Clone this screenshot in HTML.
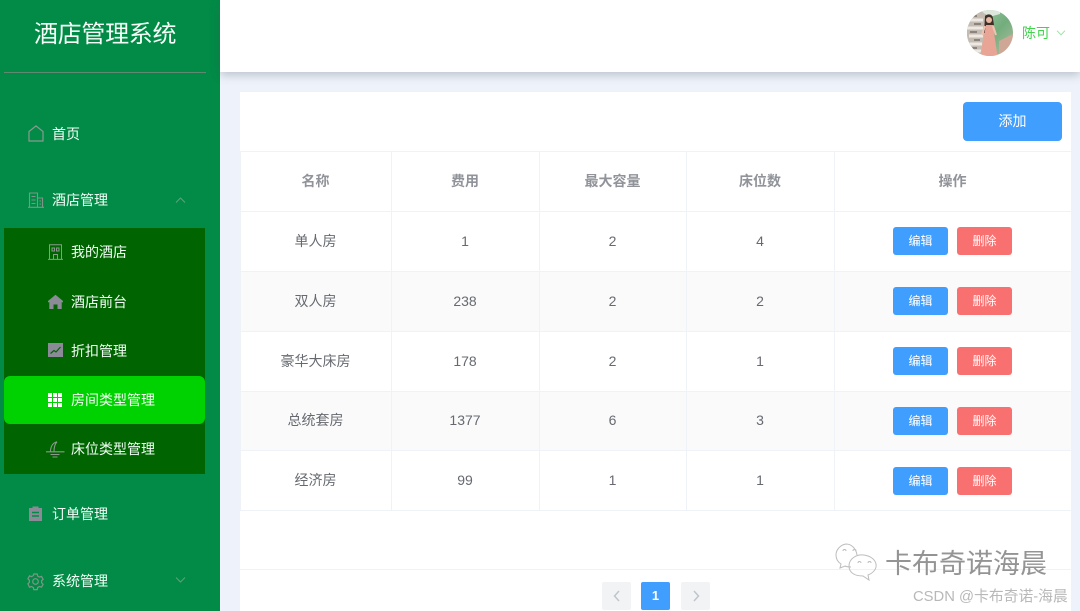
<!DOCTYPE html>
<html lang="zh"><head><meta charset="utf-8"><title>酒店管理系统</title>
<style>
*{box-sizing:border-box}
html,body{margin:0;padding:0;width:1080px;height:611px;overflow:hidden;background:#eef3fb;font-family:"Liberation Sans","Noto Sans CJK SC",sans-serif}
.a{position:absolute}
.t{position:absolute;white-space:nowrap;line-height:20px}
#side{left:0;top:0;width:220px;height:611px;background:#018b46}
.m{color:#f2fff6;font-size:14px}
.ic{position:absolute;overflow:visible}
.hl{position:absolute;left:240px;width:831px;height:1px;background:#eff2f7}
.vl{position:absolute;top:151px;width:1px;height:359px;background:#eff2f7}
.c{position:absolute;text-align:center;font-size:14px;color:#666a70;line-height:20px;white-space:nowrap}
.h{font-weight:700;color:#909399}
.b{position:absolute;width:55px;height:28px;border-radius:3px;color:#fff;font-size:12px;line-height:28px;text-align:center}
.e{left:893px;background:#409eff}
.d{left:957px;background:#f97070}
.p{position:absolute;top:582px;width:29px;height:28px;border-radius:2px;background:#f2f3f5;color:#b4b6bb;text-align:center}
</style></head><body>
<div class="a" id="side"></div>
<div class="t" style="left:34px;top:18px;font-size:24px;line-height:34px;letter-spacing:-.3px;color:#f5fff8">酒店管理系统</div>
<div class="a" style="left:4px;top:72px;width:202px;height:1px;background:#5f8a70"></div>

<svg class="ic" style="left:28px;top:125px" width="16" height="17" viewBox="0 0 16 17" fill="none" stroke="#8a9a90" stroke-width="1.2"><path d="M1 6.500 8 .9l7 5.600V16H1z"/></svg>
<div class="t m" style="left:52px;top:124px">首页</div>

<svg class="ic" style="left:28px;top:192px" width="16" height="16" viewBox="0 0 16 16" fill="none" stroke="#7f9587" stroke-width="1.100"><path d="M1.500 15V1h8v14M9.500 6H14.500v9M0 15.300h16M3.500 4.500h4M3.500 8h4M3.500 11.500h4M11.500 9h1.500M11.500 12h1.500"/></svg>
<div class="t m" style="left:52px;top:190px">酒店管理</div>
<svg class="ic" style="left:175px;top:197px" width="11" height="6" viewBox="0 0 11 6" fill="none" stroke="#5fa27c" stroke-width="1"><path d="M1 5.500 5.500 1 10 5.500"/></svg>

<div class="a" style="left:4px;top:228px;width:201px;height:246px;background:#006400"></div>
<div class="a" style="left:4px;top:376px;width:201px;height:48px;background:#00d100;border-radius:6px"></div>

<svg class="ic" style="left:48px;top:244px" width="15" height="16" viewBox="0 0 15 16" fill="none" stroke="#8a9a8c" stroke-width="1"><path d="M1.500 15V.8h12V15M0 15.400h15M4 4h2.500v3H4zM8.500 4H11v3H8.500zM5.500 15v-4.500h4V15"/></svg>
<div class="t m" style="left:71px;top:242px">我的酒店</div>

<svg class="ic" style="left:48px;top:294px" width="15" height="15" viewBox="0 0 15 15" fill="#8b8b97"><path d="M7.500 .8 15 7v1.300h-1.300V15H9.500v-4.500h-4V15H1.300V8.300H0V7z"/></svg>
<div class="t m" style="left:71px;top:292px">酒店前台</div>

<svg class="ic" style="left:48px;top:343px" width="15" height="14" viewBox="0 0 15 14"><rect width="15" height="14" fill="#8b8b97"/><path d="M2.500 10.500 6 7.500l2 1.500 4.500-5" fill="none" stroke="#006400" stroke-width="1.200"/></svg>
<div class="t m" style="left:71px;top:341px">折扣管理</div>

<svg class="ic" style="left:48px;top:393px" width="14" height="14" viewBox="0 0 14 14" fill="#fff"><rect width="4" height="4"/><rect x="5" width="4" height="4"/><rect x="10" width="4" height="4"/><rect y="5" width="4" height="4"/><rect x="5" y="5" width="4" height="4"/><rect x="10" y="5" width="4" height="4"/><rect y="10" width="4" height="4"/><rect x="5" y="10" width="4" height="4"/><rect x="10" y="10" width="4" height="4"/></svg>
<div class="t m" style="left:71px;top:390px;color:#f2fff2">房间类型管理</div>

<svg class="ic" style="left:46px;top:441px" width="19" height="17" viewBox="0 0 19 17" fill="none" stroke="#8a9a8c" stroke-width="1.100"><path d="M11 .8C6.500 2 4.500 6 4.500 10.500M11 .8C9 3 8 6.500 8 10.500M0 10.800h18.500M4.500 13.500h9M6.500 16h5"/></svg>
<div class="t m" style="left:71px;top:439px">床位类型管理</div>

<svg class="ic" style="left:29px;top:506px" width="13" height="15" viewBox="0 0 13 15" fill="#8b8b97"><path d="M0 2h3.500V.5h6V2H13v13H0z"/><path d="M3 6.500h7M3 10h7" stroke="#018b46" stroke-width="1.400"/></svg>
<div class="t m" style="left:52px;top:504px">订单管理</div>

<svg class="ic" style="left:27px;top:573px" width="17" height="17" viewBox="0 0 17 17" fill="none" stroke="#7f9587" stroke-width="1.200"><path d="M6.800 1h3.400l.5 2.100 1.800 1 2-.7 1.600 2.900-1.500 1.500v2l1.500 1.500-1.600 2.900-2-.7-1.800 1-.5 2.100H6.800l-.5-2.100-1.800-1-2 .7L.9 10.800l1.500-1.500v-2L.9 5.800l1.600-2.900 2 .7 1.800-1z"/><circle cx="8.500" cy="8.500" r="2.800"/></svg>
<div class="t m" style="left:52px;top:571px">系统管理</div>
<svg class="ic" style="left:175px;top:577px" width="11" height="6" viewBox="0 0 11 6" fill="none" stroke="#5fa27c" stroke-width="1"><path d="M1 .5 5.500 5 10 .5"/></svg>

<div class="a" style="left:220px;top:0;width:860px;height:72px;background:#fff;box-shadow:0 3px 9px rgba(70,80,90,.3)"></div>

<svg class="ic" style="left:967px;top:10px" width="46" height="46" viewBox="0 0 46 46">
<defs><clipPath id="cp"><circle cx="23" cy="23" r="23"/></clipPath>
<linearGradient id="g" x1="0" y1="0" x2="1" y2="1"><stop offset="0" stop-color="#a5cdac"/><stop offset=".55" stop-color="#72ad7c"/><stop offset="1" stop-color="#b7bfa6"/></linearGradient></defs>
<g clip-path="url(#cp)">
<rect width="46" height="46" fill="url(#g)"/>
<rect width="18" height="46" fill="#c4bcb3"/>
<path d="M1 10h15M0 18h16M2 26h14M0 34h15M3 41h13" stroke="#ece8e3" stroke-width="3"/>
<path d="M4 6h6M7 14h7M3 22h7M7 30h6M4 38h6" stroke="#6b625b" stroke-width="1.300"/>
<path d="M13 0h20v4l-11 3z" fill="#dde6dc"/>
<path d="M32 31l14-7v22H32z" fill="#cfa796"/>
<path d="M18 6c3-3 8-2 8 3l1 6h-6l-1 8h-3z" fill="#3f2d28"/>
<circle cx="22" cy="10" r="3" fill="#e5b8a2"/>
<path d="M19 15h7l1.500 11 3 20H13l4-20z" fill="#e8a596"/>
<path d="M18 16l-3 9M26 16l3 9" stroke="#f0c3b1" stroke-width="2"/>
</g></svg>
<div class="t" style="left:1022px;top:23px;font-size:14px;color:#3fd44c">陈可</div>
<svg class="ic" style="left:1056px;top:30px" width="10" height="6" viewBox="0 0 10 6" fill="none" stroke="#9ae3a0" stroke-width="1"><path d="M1 .7 5 4.800 9 .7"/></svg>

<div class="a" style="left:240px;top:92px;width:831px;height:519px;background:#fff"></div>
<div class="a" style="left:240px;top:272px;width:831px;height:59px;background:#fafafa"></div>
<div class="a" style="left:240px;top:392px;width:831px;height:58px;background:#fafafa"></div>

<div class="a" style="left:963px;top:102px;width:99px;height:39px;border-radius:4px;background:#409eff;color:#fff;font-size:14px;line-height:39px;text-align:center">添加</div>

<div class="hl" style="top:151px"></div><div class="hl" style="top:211px"></div><div class="hl" style="top:271px"></div><div class="hl" style="top:331px"></div><div class="hl" style="top:391px"></div><div class="hl" style="top:450px"></div><div class="hl" style="top:510px"></div><div class="hl" style="top:569px"></div>
<div class="vl" style="left:240px"></div><div class="vl" style="left:391px"></div><div class="vl" style="left:539px"></div><div class="vl" style="left:686px"></div><div class="vl" style="left:834px"></div>

<div class="c h" style="left:240px;width:151px;top:171px">名称</div><div class="c h" style="left:391px;width:148px;top:171px">费用</div><div class="c h" style="left:539px;width:147px;top:171px">最大容量</div><div class="c h" style="left:686px;width:148px;top:171px">床位数</div><div class="c h" style="left:834px;width:237px;top:171px">操作</div>

<div class="c" style="left:240px;width:151px;top:231px">单人房</div><div class="c" style="left:391px;width:148px;top:231px">1</div><div class="c" style="left:539px;width:147px;top:231px">2</div><div class="c" style="left:686px;width:148px;top:231px">4</div>
<div class="c" style="left:240px;width:151px;top:291px">双人房</div><div class="c" style="left:391px;width:148px;top:291px">238</div><div class="c" style="left:539px;width:147px;top:291px">2</div><div class="c" style="left:686px;width:148px;top:291px">2</div>
<div class="c" style="left:240px;width:151px;top:351px">豪华大床房</div><div class="c" style="left:391px;width:148px;top:351px">178</div><div class="c" style="left:539px;width:147px;top:351px">2</div><div class="c" style="left:686px;width:148px;top:351px">1</div>
<div class="c" style="left:240px;width:151px;top:410px">总统套房</div><div class="c" style="left:391px;width:148px;top:410px">1377</div><div class="c" style="left:539px;width:147px;top:410px">6</div><div class="c" style="left:686px;width:148px;top:410px">3</div>
<div class="c" style="left:240px;width:151px;top:470px">经济房</div><div class="c" style="left:391px;width:148px;top:470px">99</div><div class="c" style="left:539px;width:147px;top:470px">1</div><div class="c" style="left:686px;width:148px;top:470px">1</div>

<div class="b e" style="top:227px">编辑</div><div class="b d" style="top:227px">删除</div>
<div class="b e" style="top:287px">编辑</div><div class="b d" style="top:287px">删除</div>
<div class="b e" style="top:347px">编辑</div><div class="b d" style="top:347px">删除</div>
<div class="b e" style="top:407px">编辑</div><div class="b d" style="top:407px">删除</div>
<div class="b e" style="top:467px">编辑</div><div class="b d" style="top:467px">删除</div>

<div class="p" style="left:602px"><svg width="8" height="12" viewBox="0 0 8 12" style="margin-top:8px" fill="none" stroke="#c0c4cc" stroke-width="1.500"><path d="M6 1 1.500 6 6 11"/></svg></div>
<div class="a" style="left:641px;top:582px;width:29px;height:28px;border-radius:2px;background:#409eff;color:#fff;font-size:13px;font-weight:700;line-height:28px;text-align:center">1</div>
<div class="p" style="left:681px"><svg width="8" height="12" viewBox="0 0 8 12" style="margin-top:8px" fill="none" stroke="#c0c4cc" stroke-width="1.500"><path d="M2 1l4.500 5L2 11"/></svg></div>

<svg class="ic" style="left:836px;top:543px" width="44" height="38" viewBox="0 0 44 38" fill="none" stroke="#bdbdbd" stroke-width="1"><path d="M21 12C20 5 15 1 10 1 4 2 0 7 0 12c0 4 2 7 5 9l-1 4 5-2c2 1 4 1 6 1"/><path d="M28 12c-8-1-15 4-15 11s6 10 14 10l6 4-1-5c5-2 9-6 8-11-1-5-6-8-12-9z"/><path d="M7 8a1.500 1.500 0 0 1 3 0M17 8a1.500 1.500 0 0 1 3 0M22 20a1.500 1.500 0 0 1 3 0M32 20a1.500 1.500 0 0 1 3 0"/></svg>
<div class="t" style="left:885px;top:549px;font-size:27px;line-height:30px;color:#949494">卡布奇诺海晨</div>
<div class="t" style="left:913px;top:587px;font-size:14.800px;color:#b8b8b8">CSDN @卡布奇诺-海晨</div>
</body></html>
